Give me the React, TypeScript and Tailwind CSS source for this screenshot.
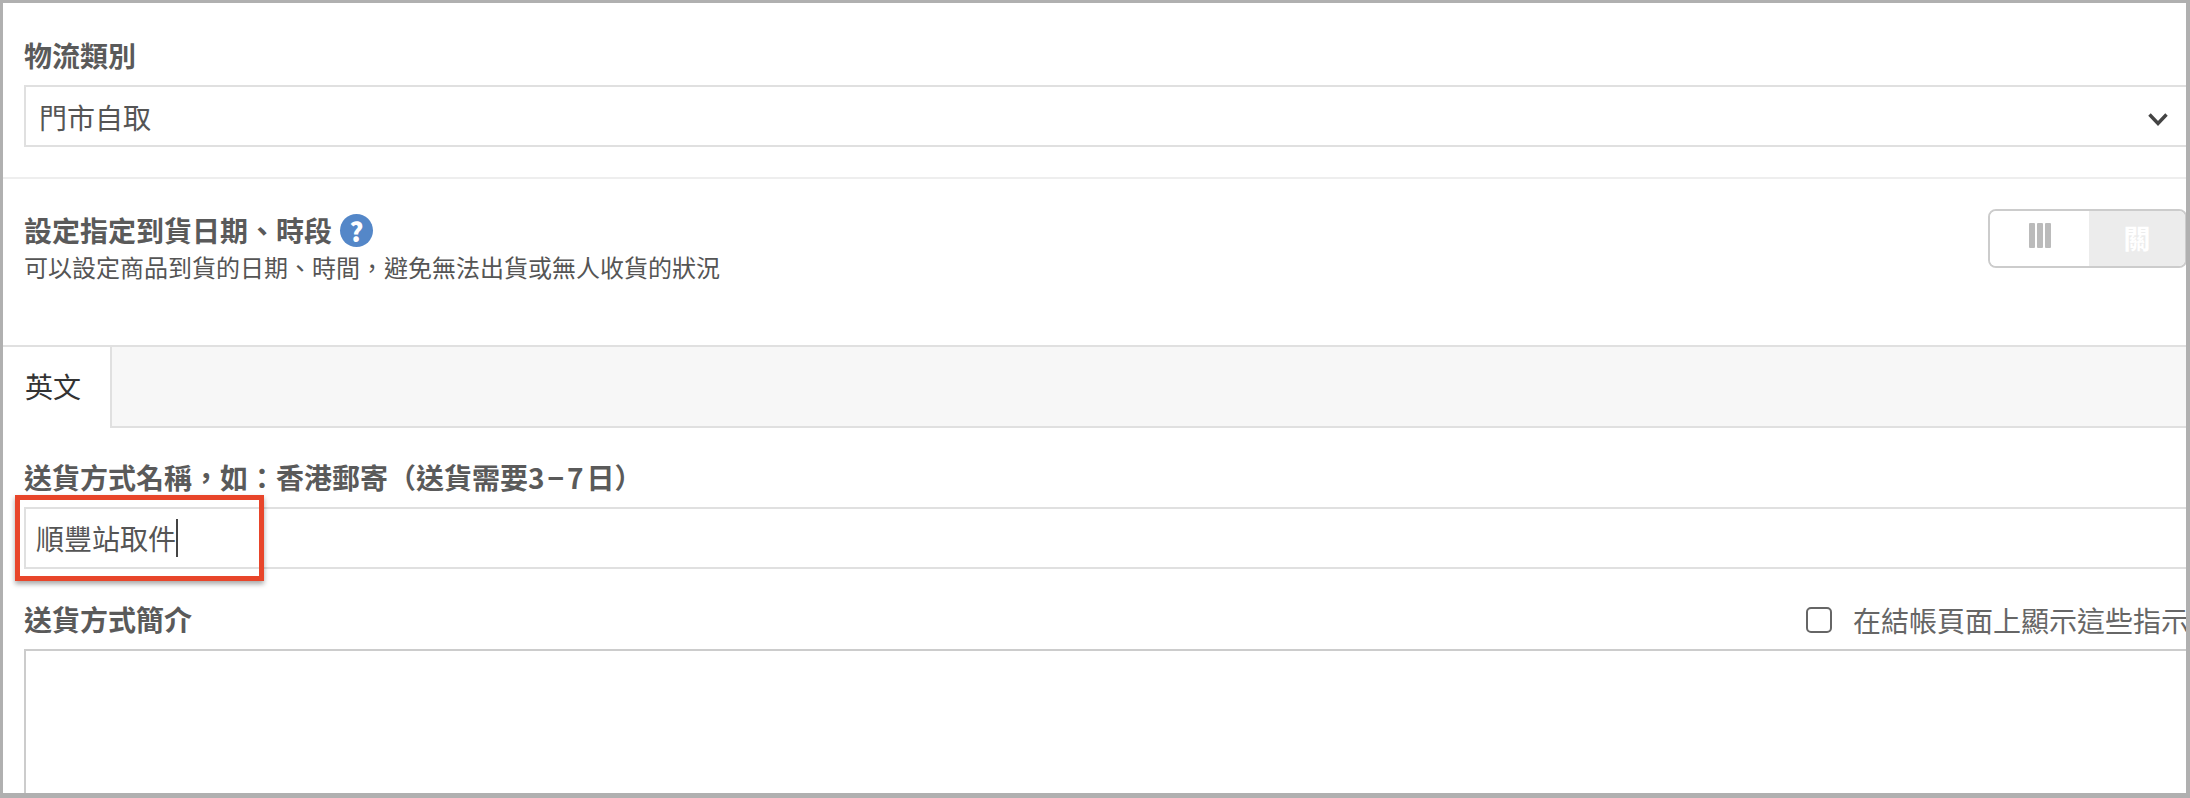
export default function App() {
  const cjk = "font-['Noto_Sans_CJK_TC','Noto_Sans',sans-serif]";
  const label = "text-[28px] leading-[36px] font-bold text-[#5a5a5a] whitespace-nowrap";
  return (
    <div className={`w-[2190px] h-[798px] overflow-hidden bg-white border-t-[3px] border-l-[3px] border-r-[4px] border-b-[5px] border-[#b0b0b0] ${cjk}`}>
      <div className="pl-[21px] pt-[34px]">
        <div className={label}>物流類別</div>
        <div className="mt-[12px] -mr-[2px] h-[62px] border-2 border-[#e0e0e0] flex items-center justify-between pl-[13px] pr-[18px] text-[28px] text-[#555555]">
          <span className="pt-[2px]">門市自取</span>
          <svg width="20" height="13" viewBox="0 0 20 13" className="mt-[6px]">
            <polyline points="1.5,1.5 10,10.5 18.5,1.5" fill="none" stroke="#444444" strokeWidth="3.4" />
          </svg>
        </div>
      </div>
      <div className="mt-[30px] h-[2px] bg-[#eeeeee]" />
      <div className="mt-[30px] pl-[21px] -mr-[1px] flex justify-between items-start h-[136px]">
        <div className="pt-[3px]">
          <div className="flex items-center gap-[8px]">
            <span className={label}>{"設定指定到貨日期\u3001時段"}</span>
            <span className="w-[33px] h-[33px] rounded-full bg-[#5487c8] flex items-center justify-center text-[26px] leading-[33px] font-black text-white">?</span>
          </div>
          <div className="mt-[4px] text-[24px] leading-[30px] text-[#555555] whitespace-nowrap">{"可以設定商品到貨的日期\u3001時間\uFF0C避免無法出貨或無人收貨的狀況"}</div>
        </div>
        <div className="w-[199px] h-[59px] border-2 border-[#cccccc] rounded-[8px] flex overflow-hidden">
          <div className="w-[99px] bg-white flex items-center justify-center gap-[2px]">
            <span className="w-[6px] h-[25px] rounded-[1px] bg-[#bbbbbb] -mt-[6px]" />
            <span className="w-[6px] h-[25px] rounded-[1px] bg-[#bbbbbb] -mt-[6px]" />
            <span className="w-[6px] h-[25px] rounded-[1px] bg-[#bbbbbb] -mt-[6px]" />
          </div>
          <div className="flex-1 bg-[#ececec] flex items-center justify-center text-[27px] font-bold text-white">關</div>
        </div>
      </div>
      <div className="border-t-2 border-[#e0e0e0] flex h-[83px]">
        <div className="w-[107px] pl-[22px] flex items-center text-[28px] text-[#333333] pb-[4px]">英文</div>
        <div className="flex-1 bg-[#f7f7f7] border-l-2 border-b-2 border-[#e0e0e0]" />
      </div>
      <div className="pl-[21px] pt-[31px]">
        <div className={label}>
          {"送貨方式名稱\uFF0C如\uFF1A香港郵寄\uFF08送貨需要"}
          <span className="tracking-[3px]">{"3\u22127"}</span>
          {"日\uFF09"}
        </div>
        <div className="relative mt-[12px] -mr-[2px] h-[62px] border-2 border-[#e0e0e0] flex items-center pl-[10px] text-[28px] text-[#555555]">
          <span className="whitespace-nowrap">順豐站取件</span>
          <span className="w-[2px] h-[38px] bg-[#444444]" />
          <div className="absolute -left-[11px] -top-[14px] w-[249px] h-[86px] border-[5px] border-[#e8452a] shadow-[0_3px_5px_rgba(0,0,0,0.35)]" />
        </div>
        <div className="mt-[32px] flex items-center justify-between">
          <span className={`${label} pb-[2px]`}>送貨方式簡介</span>
          <div className="flex items-center -mr-[3px] text-[28px] leading-[36px] text-[#666666] whitespace-nowrap">
            <span className="w-[26px] h-[26px] border-2 border-[#666666] rounded-[5px] mr-[21px]" />
            <span>在結帳頁面上顯示這些指示</span>
          </div>
        </div>
        <div className="mt-[10px] -mr-[2px] h-[200px] border-2 border-[#cccccc]" />
      </div>
    </div>
  );
}
